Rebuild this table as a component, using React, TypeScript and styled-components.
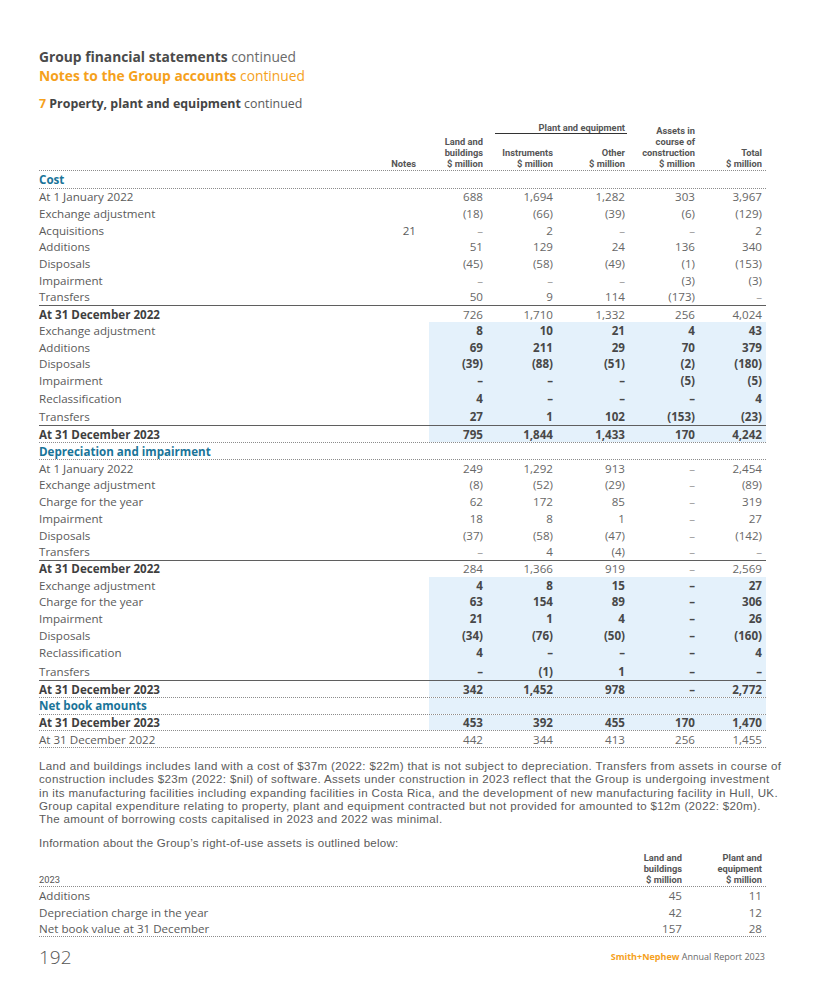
import React from 'react';
import styled, { createGlobalStyle } from 'styled-components';

const GlobalStyle = createGlobalStyle`
  html, body { margin: 0; padding: 0; background: #ffffff; }
  body { font-family: "Open Sans", Lato, "Liberation Sans", sans-serif; color: #555; }
  * { box-sizing: border-box; }
`;

const ORANGE = '#f5a11c';
const BLUE = '#1a7499';
const SHADE = '#e4f1fb';
const COLS = '341px 49px 58px 70px 72px 70px 67px';
const HEAD_FONT = 'Roboto, "Liberation Sans", sans-serif';

const Page = styled.div`
  width: 825px;
  padding: 46.5px 0 0 39px;
`;

const Content = styled.div`
  width: 727px;
`;

const TitleLine = styled.div<{ $accent?: boolean }>`
  font-size: 13.8px;
  line-height: 19px;
  color: ${(p) => (p.$accent ? ORANGE : '#6a6a6a')};
  b {
    font-weight: 700;
    color: ${(p) => (p.$accent ? ORANGE : '#4a4a4a')};
  }
`;

const SubTitle = styled.div`
  margin-top: 10.5px;
  font-size: 12.4px;
  line-height: 17px;
  color: #5a5a5a;
  b { font-weight: 700; color: #444; }
  em { font-style: normal; font-weight: 700; color: ${ORANGE}; }
`;

const HeadGrid = styled.div`
  margin-top: 9.5px;
  display: grid;
  grid-template-columns: ${COLS};
  grid-template-rows: auto auto;
  font-family: ${HEAD_FONT};
  font-size: 9.3px;
  font-weight: 700;
  line-height: 11px;
  color: #555;
  padding-bottom: 1.5px;
  border-bottom: 1px dotted #8c8c8c;
`;

const HeadCell = styled.div<{ $col: number; $span?: boolean; $pad?: number }>`
  grid-column: ${(p) => p.$col};
  grid-row: ${(p) => (p.$span ? '1 / 3' : '2')};
  align-self: end;
  text-align: right;
  padding-right: ${(p) => p.$pad ?? 4}px;
`;

const GroupHead = styled.div`
  grid-column: 4 / 6;
  grid-row: 1;
  align-self: start;
  text-align: right;
  margin-left: 8px;
  margin-right: 2px;
  padding-right: 2px;
  margin-bottom: 13px;
  border-bottom: 1px solid #333;
`;

const Row = styled.div<{ $h: number; $rule?: boolean; $dotted?: boolean }>`
  display: grid;
  grid-template-columns: ${COLS};
  height: ${(p) => p.$h}px;
  font-size: 11.6px;
  border-top: ${(p) => (p.$rule ? '1.6px solid #5f5f5f' : 'none')};
  border-bottom: ${(p) => (p.$dotted ? '1px dotted #8c8c8c' : 'none')};
`;

const Label = styled.div<{ $kind: 'section' | 'item' | 'total' }>`
  display: flex;
  align-items: center;
  font-weight: ${(p) => (p.$kind === 'item' ? 400 : 700)};
  color: ${(p) => (p.$kind === 'section' ? BLUE : p.$kind === 'total' ? '#3f3f3f' : '#5a5a5a')};
  white-space: nowrap;
`;

const NoteCell = styled.div`
  display: flex;
  align-items: center;
  justify-content: flex-end;
  padding-right: 13px;
  color: #5a5a5a;
`;

const Val = styled.div<{ $shaded?: boolean; $bold?: boolean; $dash?: boolean }>`
  display: flex;
  align-items: center;
  justify-content: flex-end;
  padding-right: 4px;
  background: ${(p) => (p.$shaded ? SHADE : 'transparent')};
  font-weight: ${(p) => (p.$bold ? 700 : 400)};
  color: ${(p) => (p.$bold ? '#484848' : p.$dash ? '#9a9a9a' : '#676767')};
`;

const Para = styled.p`
  margin: 12px 0 0;
  font-family: "Liberation Sans", Arial, sans-serif;
  font-size: 11.55px;
  letter-spacing: 0.35px;
  line-height: 13.3px;
  color: #5a5a5a;
  white-space: nowrap;
`;

const Info = styled.p`
  margin: 10.5px 0 0;
  font-family: "Liberation Sans", Arial, sans-serif;
  font-size: 11.55px;
  letter-spacing: 0.25px;
  line-height: 13.3px;
  color: #5a5a5a;
`;

const COLS2 = '569px 78px 80px';

const Head2 = styled.div`
  margin-top: 1.5px;
  display: grid;
  grid-template-columns: ${COLS2};
  font-family: ${HEAD_FONT};
  font-size: 9.3px;
  line-height: 11px;
  font-weight: 700;
  color: #555;
  padding-bottom: 1.5px;
  border-bottom: 1px dotted #8c8c8c;
`;

const Head2Cell = styled.div<{ $left?: boolean }>`
  align-self: end;
  text-align: ${(p) => (p.$left ? 'left' : 'right')};
  padding-right: ${(p) => (p.$left ? 0 : 4)}px;
  font-weight: ${(p) => (p.$left ? 400 : 700)};
`;

const Row2 = styled.div<{ $dotted?: boolean }>`
  display: grid;
  grid-template-columns: ${COLS2};
  height: 16.5px;
  font-size: 11.6px;
  color: #5a5a5a;
  border-bottom: ${(p) => (p.$dotted ? '1px dotted #8c8c8c' : 'none')};
`;

const Cell2 = styled.div<{ $num?: boolean }>`
  display: flex;
  align-items: center;
  justify-content: ${(p) => (p.$num ? 'flex-end' : 'flex-start')};
  padding-right: ${(p) => (p.$num ? 4 : 0)}px;
  color: ${(p) => (p.$num ? '#676767' : '#5a5a5a')};
`;

const Footer = styled.div`
  margin-top: 8px;
  display: flex;
  justify-content: space-between;
  align-items: center;
  height: 24px;
`;

const PageNo = styled.div`
  font-size: 19px;
  font-weight: 300;
  color: #555;
`;

const Brand = styled.div`
  font-size: 9px;
  color: #6a6a6a;
  padding-right: 1px;
  b { color: ${ORANGE}; font-weight: 700; }
`;

type Kind = 'section' | 'item' | 'total';
type RowDef = {
  label: string;
  note?: string;
  v?: string[];
  kind?: Kind;
  shaded?: boolean;
  bold?: boolean;
  rule?: boolean;
  dotted?: boolean;
  h?: number;
};

const D = '–';

const rows: RowDef[] = [
  { label: 'Cost', kind: 'section', dotted: true, h: 17.5 },
  { label: 'At 1 January 2022', v: ['688', '1,694', '1,282', '303', '3,967'] },
  { label: 'Exchange adjustment', v: ['(18)', '(66)', '(39)', '(6)', '(129)'] },
  { label: 'Acquisitions', note: '21', v: [D, '2', D, D, '2'] },
  { label: 'Additions', v: ['51', '129', '24', '136', '340'] },
  { label: 'Disposals', v: ['(45)', '(58)', '(49)', '(1)', '(153)'] },
  { label: 'Impairment', v: [D, D, D, '(3)', '(3)'] },
  { label: 'Transfers', v: ['50', '9', '114', '(173)', D] },
  { label: 'At 31 December 2022', kind: 'total', rule: true, v: ['726', '1,710', '1,332', '256', '4,024'] },
  { label: 'Exchange adjustment', shaded: true, bold: true, v: ['8', '10', '21', '4', '43'] },
  { label: 'Additions', shaded: true, bold: true, v: ['69', '211', '29', '70', '379'] },
  { label: 'Disposals', shaded: true, bold: true, v: ['(39)', '(88)', '(51)', '(2)', '(180)'] },
  { label: 'Impairment', shaded: true, bold: true, v: [D, D, D, '(5)', '(5)'] },
  { label: 'Reclassification', shaded: true, bold: true, h: 18.5, v: ['4', D, D, D, '4'] },
  { label: 'Transfers', shaded: true, bold: true, h: 18, v: ['27', '1', '102', '(153)', '(23)'] },
  { label: 'At 31 December 2023', kind: 'total', rule: true, dotted: true, shaded: true, bold: true, h: 18, v: ['795', '1,844', '1,433', '170', '4,242'] },
  { label: 'Depreciation and impairment', kind: 'section', dotted: true },
  { label: 'At 1 January 2022', v: ['249', '1,292', '913', D, '2,454'] },
  { label: 'Exchange adjustment', v: ['(8)', '(52)', '(29)', D, '(89)'] },
  { label: 'Charge for the year', v: ['62', '172', '85', D, '319'] },
  { label: 'Impairment', v: ['18', '8', '1', D, '27'] },
  { label: 'Disposals', v: ['(37)', '(58)', '(47)', D, '(142)'] },
  { label: 'Transfers', v: [D, '4', '(4)', D, D] },
  { label: 'At 31 December 2022', kind: 'total', rule: true, v: ['284', '1,366', '919', D, '2,569'] },
  { label: 'Exchange adjustment', shaded: true, bold: true, v: ['4', '8', '15', D, '27'] },
  { label: 'Charge for the year', shaded: true, bold: true, v: ['63', '154', '89', D, '306'] },
  { label: 'Impairment', shaded: true, bold: true, v: ['21', '1', '4', D, '26'] },
  { label: 'Disposals', shaded: true, bold: true, v: ['(34)', '(76)', '(50)', D, '(160)'] },
  { label: 'Reclassification', shaded: true, bold: true, h: 18.5, v: ['4', D, D, D, '4'] },
  { label: 'Transfers', shaded: true, bold: true, h: 18, v: [D, '(1)', '1', D, D] },
  { label: 'At 31 December 2023', kind: 'total', rule: true, dotted: true, shaded: true, bold: true, h: 18, v: ['342', '1,452', '978', D, '2,772'] },
  { label: 'Net book amounts', kind: 'section', dotted: true, shaded: true, v: ['', '', '', '', ''] },
  { label: 'At 31 December 2023', kind: 'total', dotted: true, shaded: true, bold: true, v: ['453', '392', '455', '170', '1,470'] },
  { label: 'At 31 December 2022', dotted: true, v: ['442', '344', '413', '256', '1,455'] },
];

const rou = [
  { label: 'Additions', v: ['45', '11'] },
  { label: 'Depreciation charge in the year', v: ['42', '12'] },
  { label: 'Net book value at 31 December', v: ['157', '28'], dotted: true },
];

export default function App() {
  return (
    <>
      <GlobalStyle />
      <Page>
        <Content>
          <TitleLine>
            <b>Group financial statements</b> continued
          </TitleLine>
          <TitleLine $accent>
            <b>Notes to the Group accounts</b> continued
          </TitleLine>
          <SubTitle>
            <em>7</em> <b>Property, plant and equipment</b> continued
          </SubTitle>

          <HeadGrid>
            <GroupHead>Plant and equipment</GroupHead>
            <HeadCell $col={2} $span $pad={13}>Notes</HeadCell>
            <HeadCell $col={3} $span>
              Land and
              <br />
              buildings
              <br />$ million
            </HeadCell>
            <HeadCell $col={4}>
              Instruments
              <br />$ million
            </HeadCell>
            <HeadCell $col={5}>
              Other
              <br />$ million
            </HeadCell>
            <HeadCell $col={6} $span>
              Assets in
              <br />
              course of
              <br />
              construction
              <br />$ million
            </HeadCell>
            <HeadCell $col={7} $span>
              Total
              <br />$ million
            </HeadCell>
          </HeadGrid>

          {rows.map((r, i) => {
            const kind: Kind = r.kind ?? 'item';
            return (
              <Row key={i} $h={r.h ?? 16.7} $rule={r.rule} $dotted={r.dotted}>
                <Label $kind={kind}>{r.label}</Label>
                <NoteCell>{r.note ?? ''}</NoteCell>
                {(r.v ?? ['', '', '', '', '']).map((x, j) => (
                  <Val key={j} $shaded={r.shaded} $bold={r.bold} $dash={x === D}>
                    {x}
                  </Val>
                ))}
              </Row>
            );
          })}

          <Para>
            Land and buildings includes land with a cost of $37m (2022: $22m) that is not subject to depreciation. Transfers from assets in course of
            <br />
            construction includes $23m (2022: $nil) of software. Assets under construction in 2023 reflect that the Group is undergoing investment
            <br />
            in its manufacturing facilities including expanding facilities in Costa Rica, and the development of new manufacturing facility in Hull, UK.
            <br />
            Group capital expenditure relating to property, plant and equipment contracted but not provided for amounted to $12m (2022: $20m).
            <br />
            The amount of borrowing costs capitalised in 2023 and 2022 was minimal.
          </Para>
          <Info>Information about the Group’s right-of-use assets is outlined below:</Info>

          <Head2>
            <Head2Cell $left>2023</Head2Cell>
            <Head2Cell>
              Land and
              <br />
              buildings
              <br />$ million
            </Head2Cell>
            <Head2Cell>
              Plant and
              <br />
              equipment
              <br />$ million
            </Head2Cell>
          </Head2>
          {rou.map((r, i) => (
            <Row2 key={i} $dotted={r.dotted}>
              <Cell2>{r.label}</Cell2>
              <Cell2 $num>{r.v[0]}</Cell2>
              <Cell2 $num>{r.v[1]}</Cell2>
            </Row2>
          ))}

          <Footer>
            <PageNo>192</PageNo>
            <Brand>
              <b>Smith+Nephew</b> Annual Report 2023
            </Brand>
          </Footer>
        </Content>
      </Page>
    </>
  );
}
